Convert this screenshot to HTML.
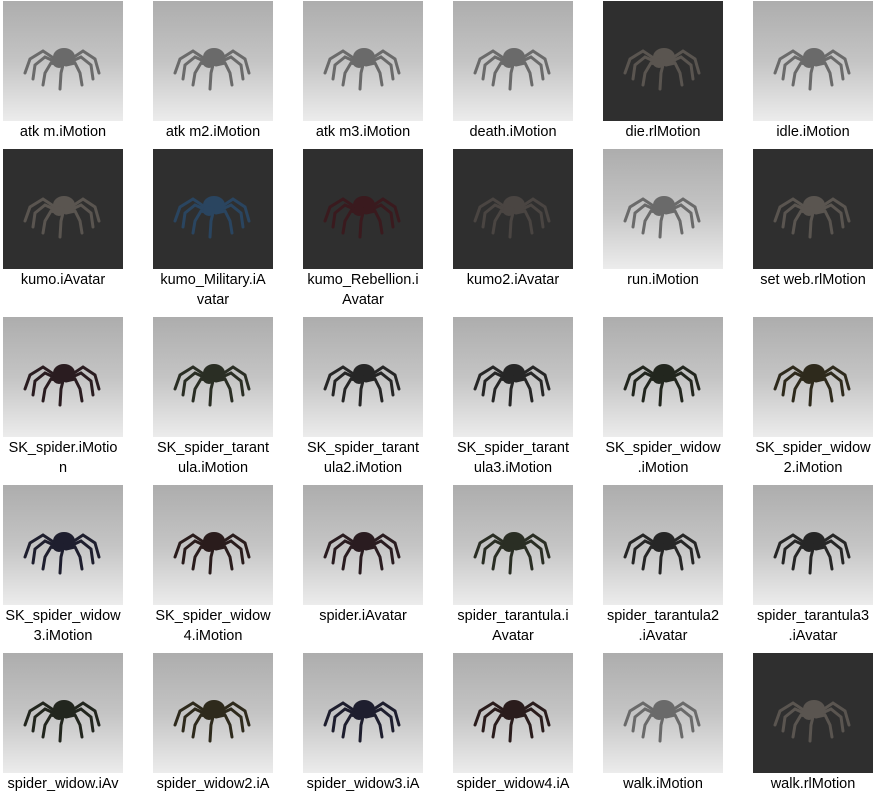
<!DOCTYPE html>
<html><head><meta charset="utf-8"><style>
body{margin:0;width:877px;height:797px;background:#fff;position:relative;overflow:hidden;font-family:"Liberation Sans",sans-serif;}
.c{position:absolute;width:150px;}
.t{position:absolute;left:3px;top:0;width:120px;height:120px;}
.l{background:linear-gradient(#adadad 0%,#c4c4c4 50%,#ececec 100%);}
.d{background:#2f2f2f;}
.n{position:absolute;left:-12px;top:121px;width:150px;text-align:center;font-size:14.5px;line-height:20px;color:#000;white-space:nowrap;}
svg{width:120px;height:120px;display:block}
</style></head><body>
<svg width="0" height="0" style="position:absolute">
<defs>
<symbol id="s" viewBox="0 0 120 120">
<g fill="none" stroke="currentColor" stroke-width="3" stroke-linecap="round">
<path d="M55 60 L40 50 L27 58 L22 72"/>
<path d="M55 62 L42 56 L32 64 L30 78"/>
<path d="M57 64 L48 62 L42 72 L40 84"/>
<path d="M60 64 L58 72 L57 88"/>
<path d="M65 60 L80 50 L92 58 L96 72"/>
<path d="M65 62 L78 56 L88 64 L90 78"/>
<path d="M63 64 L72 62 L77 72 L79 84"/>
</g>
<ellipse cx="61" cy="56" rx="11" ry="9" fill="currentColor"/>
<ellipse cx="56" cy="62" rx="6" ry="5" fill="currentColor"/>
</symbol>
</defs></svg>

<div class="c" style="left:0;top:1px"><div class="t l" style="color:#6a6a6a"><svg><use href="#s"/></svg></div><div class="n">atk m.iMotion</div></div>
<div class="c" style="left:150px;top:1px"><div class="t l" style="color:#6a6a6a"><svg><use href="#s"/></svg></div><div class="n">atk m2.iMotion</div></div>
<div class="c" style="left:300px;top:1px"><div class="t l" style="color:#6a6a6a"><svg><use href="#s"/></svg></div><div class="n">atk m3.iMotion</div></div>
<div class="c" style="left:450px;top:1px"><div class="t l" style="color:#6a6a6a"><svg><use href="#s"/></svg></div><div class="n">death.iMotion</div></div>
<div class="c" style="left:600px;top:1px"><div class="t d" style="color:#5a5550"><svg><use href="#s"/></svg></div><div class="n">die.rlMotion</div></div>
<div class="c" style="left:750px;top:1px"><div class="t l" style="color:#6a6a6a"><svg><use href="#s"/></svg></div><div class="n">idle.iMotion</div></div>

<div class="c" style="left:0;top:149px"><div class="t d" style="color:#5a5550"><svg><use href="#s"/></svg></div><div class="n">kumo.iAvatar</div></div>
<div class="c" style="left:150px;top:149px"><div class="t d" style="color:#2a4560"><svg><use href="#s"/></svg></div><div class="n">kumo_Military.iA<br>vatar</div></div>
<div class="c" style="left:300px;top:149px"><div class="t d" style="color:#3a1a1e"><svg><use href="#s"/></svg></div><div class="n">kumo_Rebellion.i<br>Avatar</div></div>
<div class="c" style="left:450px;top:149px"><div class="t d" style="color:#4a4542"><svg><use href="#s"/></svg></div><div class="n">kumo2.iAvatar</div></div>
<div class="c" style="left:600px;top:149px"><div class="t l" style="color:#6a6a6a"><svg><use href="#s"/></svg></div><div class="n">run.iMotion</div></div>
<div class="c" style="left:750px;top:149px"><div class="t d" style="color:#5a5550"><svg><use href="#s"/></svg></div><div class="n">set web.rlMotion</div></div>

<div class="c" style="left:0;top:317px"><div class="t l" style="color:#2a1c20"><svg><use href="#s"/></svg></div><div class="n">SK_spider.iMotio<br>n</div></div>
<div class="c" style="left:150px;top:317px"><div class="t l" style="color:#2a2e24"><svg><use href="#s"/></svg></div><div class="n">SK_spider_tarant<br>ula.iMotion</div></div>
<div class="c" style="left:300px;top:317px"><div class="t l" style="color:#262626"><svg><use href="#s"/></svg></div><div class="n">SK_spider_tarant<br>ula2.iMotion</div></div>
<div class="c" style="left:450px;top:317px"><div class="t l" style="color:#262626"><svg><use href="#s"/></svg></div><div class="n">SK_spider_tarant<br>ula3.iMotion</div></div>
<div class="c" style="left:600px;top:317px"><div class="t l" style="color:#22261e"><svg><use href="#s"/></svg></div><div class="n">SK_spider_widow<br>.iMotion</div></div>
<div class="c" style="left:750px;top:317px"><div class="t l" style="color:#2e2a1c"><svg><use href="#s"/></svg></div><div class="n">SK_spider_widow<br>2.iMotion</div></div>

<div class="c" style="left:0;top:485px"><div class="t l" style="color:#1e1e2e"><svg><use href="#s"/></svg></div><div class="n">SK_spider_widow<br>3.iMotion</div></div>
<div class="c" style="left:150px;top:485px"><div class="t l" style="color:#2a1c1c"><svg><use href="#s"/></svg></div><div class="n">SK_spider_widow<br>4.iMotion</div></div>
<div class="c" style="left:300px;top:485px"><div class="t l" style="color:#2a1c20"><svg><use href="#s"/></svg></div><div class="n">spider.iAvatar</div></div>
<div class="c" style="left:450px;top:485px"><div class="t l" style="color:#2a2e24"><svg><use href="#s"/></svg></div><div class="n">spider_tarantula.i<br>Avatar</div></div>
<div class="c" style="left:600px;top:485px"><div class="t l" style="color:#262626"><svg><use href="#s"/></svg></div><div class="n">spider_tarantula2<br>.iAvatar</div></div>
<div class="c" style="left:750px;top:485px"><div class="t l" style="color:#262626"><svg><use href="#s"/></svg></div><div class="n">spider_tarantula3<br>.iAvatar</div></div>

<div class="c" style="left:0;top:653px"><div class="t l" style="color:#22261e"><svg><use href="#s"/></svg></div><div class="n">spider_widow.iAv</div></div>
<div class="c" style="left:150px;top:653px"><div class="t l" style="color:#2e2a1c"><svg><use href="#s"/></svg></div><div class="n">spider_widow2.iA</div></div>
<div class="c" style="left:300px;top:653px"><div class="t l" style="color:#1e1e2e"><svg><use href="#s"/></svg></div><div class="n">spider_widow3.iA</div></div>
<div class="c" style="left:450px;top:653px"><div class="t l" style="color:#2a1c1c"><svg><use href="#s"/></svg></div><div class="n">spider_widow4.iA</div></div>
<div class="c" style="left:600px;top:653px"><div class="t l" style="color:#6a6a6a"><svg><use href="#s"/></svg></div><div class="n">walk.iMotion</div></div>
<div class="c" style="left:750px;top:653px"><div class="t d" style="color:#5a5550"><svg><use href="#s"/></svg></div><div class="n">walk.rlMotion</div></div>
</body></html>
